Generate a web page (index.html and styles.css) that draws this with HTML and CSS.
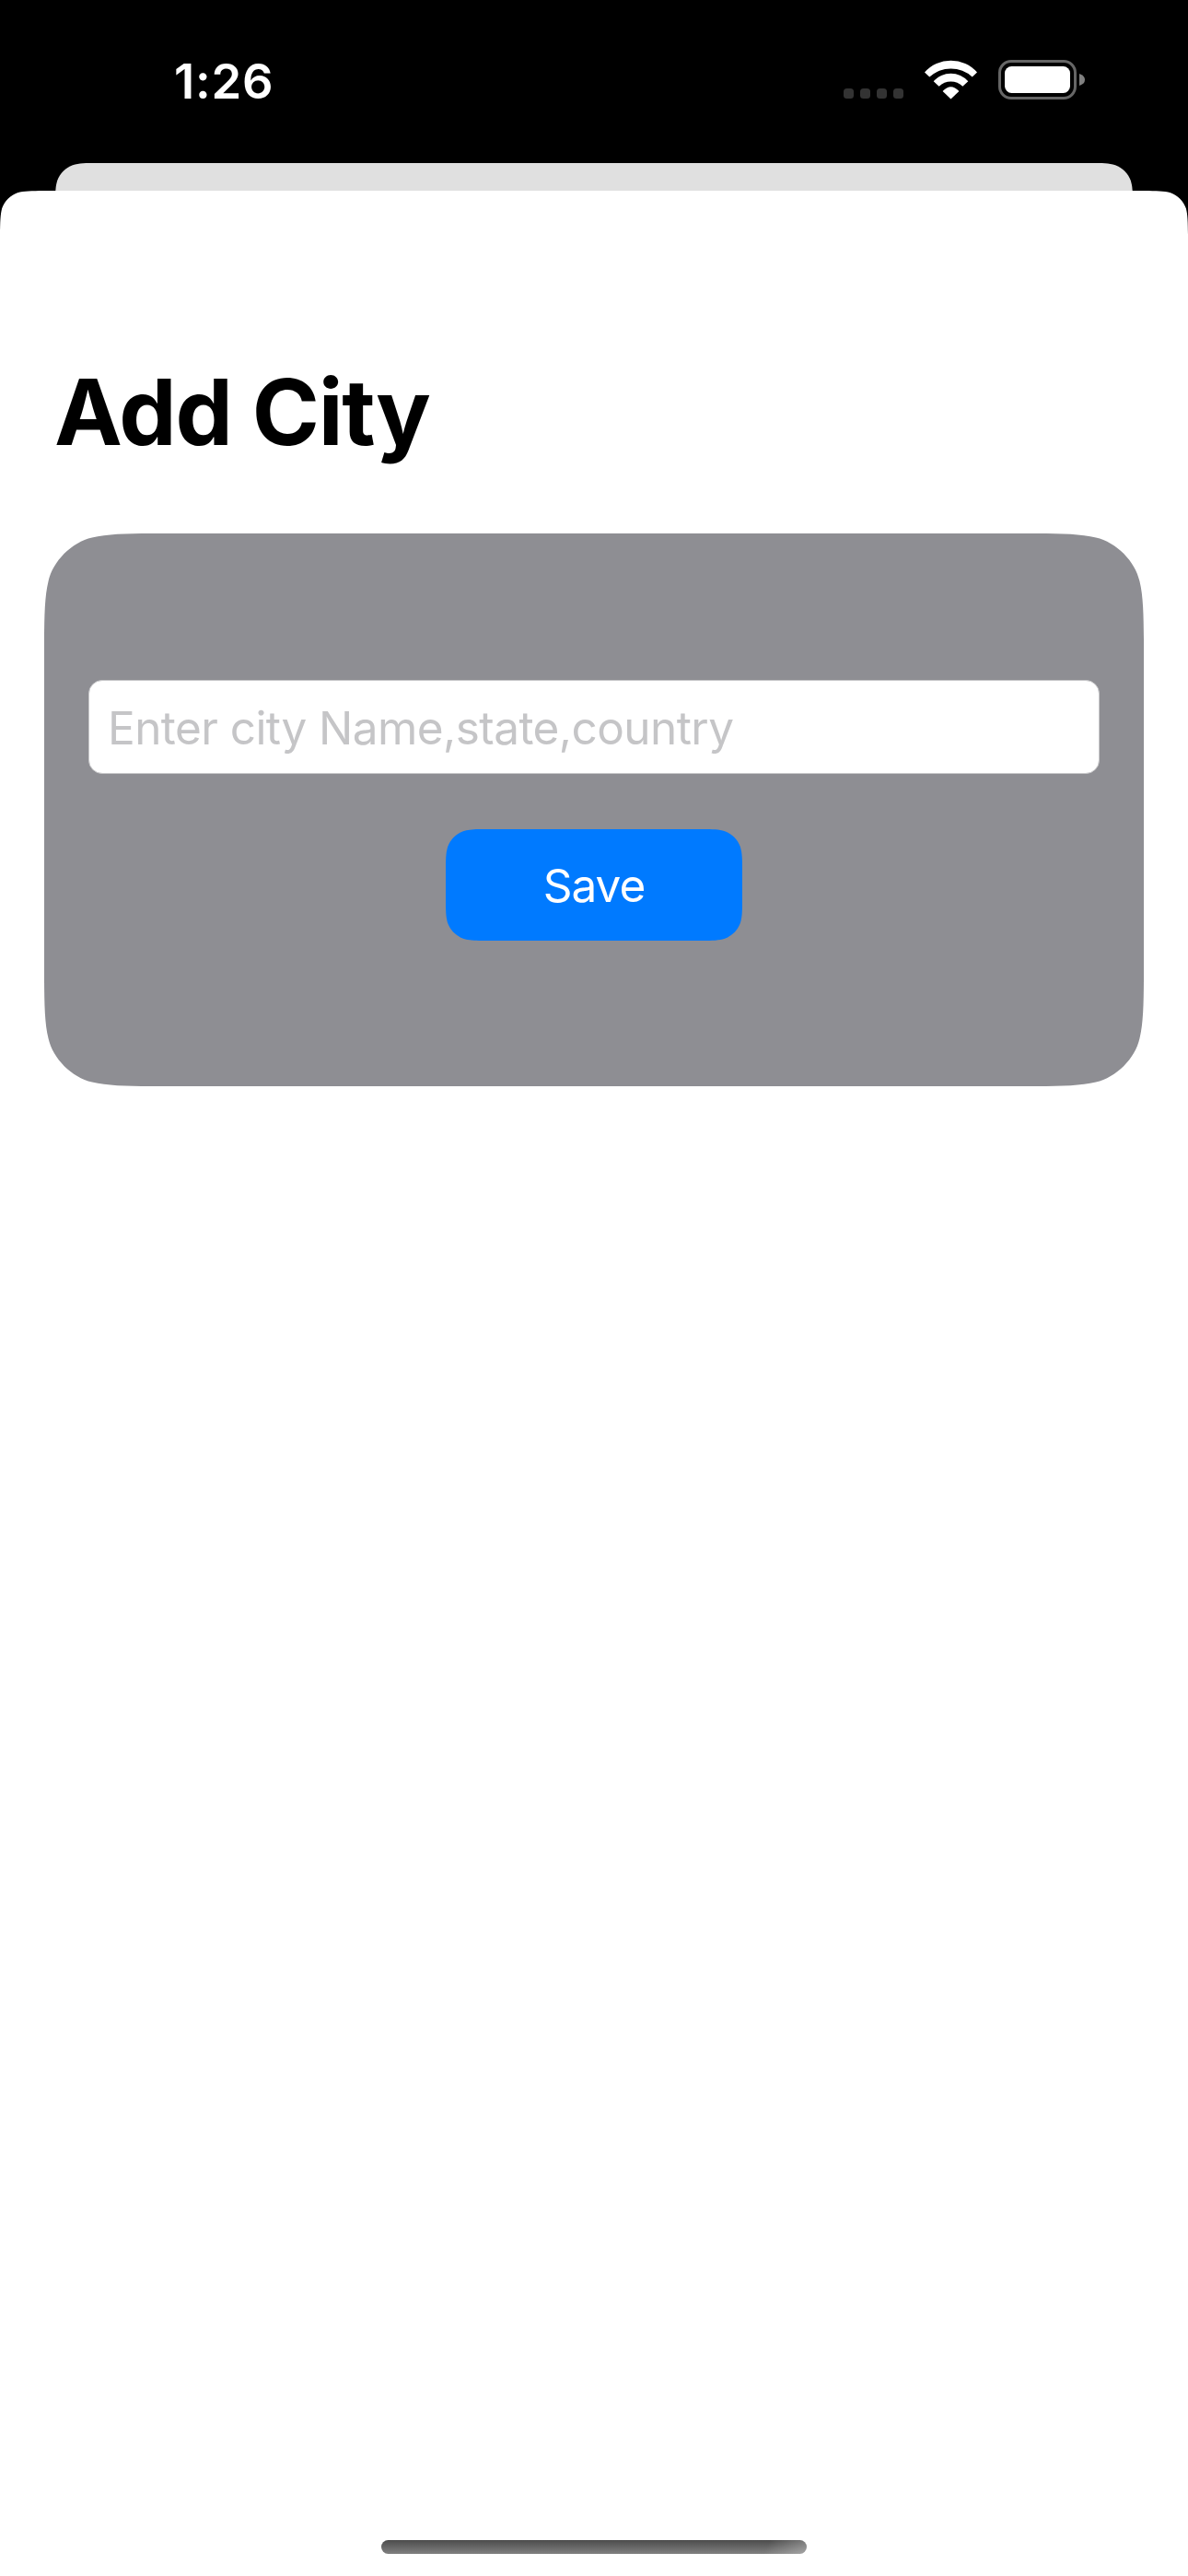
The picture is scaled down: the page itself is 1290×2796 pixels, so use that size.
FILE: index.html
```
<!DOCTYPE html>
<html lang="en">
<head>
<meta charset="utf-8">
<title>Add City</title>
<link rel="stylesheet" href="styles.css">
</head>
<body>
<header class="status-bar">
  <span class="time">1:26</span>
  <svg class="status-icons" width="264" height="44" viewBox="0 0 264 44" aria-hidden="true">
    <g fill="#333">
      <rect x="0" y="31" width="11" height="11" rx="3.5"/>
      <rect x="18" y="31" width="11" height="11" rx="3.5"/>
      <rect x="36" y="31" width="11" height="11" rx="3.5"/>
      <rect x="54" y="31" width="11" height="11" rx="3.5"/>
    </g>
    <g fill="#fff">
      <path d="M88 13.5A38 38 0 0 1 145 13.5L139.700 18.500A34.400 34.400 0 0 0 93.300 18.500Z"/>
      <path d="M97.700 23.300A25 25 0 0 1 135.300 23.300L129.300 28.800A18 18 0 0 0 103.700 28.800Z"/>
      <path d="M107.600 34Q116.500 24.600 125.400 34L116.500 42.500Z"/>
    </g>
    <rect x="169.500" y="1.500" width="82" height="40" rx="12.500" fill="none" stroke="#666" stroke-width="3"/>
    <rect x="175" y="7" width="71" height="29" rx="7.500" fill="#fff"/>
    <path d="M256 15Q262 17 262 21.500Q262 26 256 28Z" fill="#808080"/>
  </svg>
</header>
<div class="back-sheet"></div>
<main class="sheet">
  <h1 class="title">Add City</h1>
  <form class="card">
    <input class="city-field" type="text" placeholder="Enter city Name,state,country" aria-label="City">
    <button class="save" type="button">Save</button>
  </form>
  <div class="home-indicator"></div>
</main>
</body>
</html>
```
FILE: styles.css
```
* {
  box-sizing: border-box;
}

body {
  margin: 0;
  width: 1290px;
  height: 2796px;
  display: flex;
  flex-direction: column;
  overflow: hidden;
  background: #000;
  font-family: Inter, "Liberation Sans", sans-serif;
}

.status-bar {
  display: flex;
  justify-content: space-between;
  height: 177px;
  padding: 65px 110px 0 189px;
}

.time {
  height: 46px;
  color: #fff;
  font-size: 52.5px;
  font-weight: 600;
  line-height: 46px;
  letter-spacing: 0.8px;
}

.back-sheet {
  height: 30px;
  margin: 0 60px;
  background: #e0e0e0;
  /* continuous-curvature corners, radius 30 */
  clip-path: path("M0 46C0 32.600 0 26 2.200 18.900C5 11.200 11.200 5 18.900 2.200C26 0 32.600 0 46 0H1124C1137.400 0 1144 0 1151.100 2.200C1158.800 5 1165 11.200 1167.800 18.900C1170 26 1170 32.600 1170 46Z");
}

.sheet {
  flex: 1;
  display: flex;
  flex-direction: column;
  padding: 180px 48px 24px;
  background: #fff;
  clip-path: path("M0 48C0.200 34 0.300 26 2.200 18.900C5 11.200 11.200 5 18.900 2.200C26 0.300 34 0.200 48 0H1242C1256 0.200 1264 0.300 1271.100 2.200C1278.800 5 1285 11.200 1287.800 18.900C1289.700 26 1289.800 34 1290 48V2589H0Z");
}

.title {
  margin: 0 0 72px;
  padding-left: 11px;
  color: #000;
  font-size: 99px;
  font-weight: 700;
  line-height: 120px;
  letter-spacing: -1.3px;
}

.card {
  display: flex;
  flex-direction: column;
  align-items: center;
  gap: 60px;
  height: 600px;
  padding: 159px 48px 0;
  background: #8e8e93;
  /* continuous-curvature corners, radius 75 */
  clip-path: path("M0 116C0.200 88 0.600 68 4.500 52C9.400 30 30 9.400 52 4.500C68 0.600 88 0.200 116 0H1078C1106 0.200 1126 0.600 1142 4.500C1164 9.400 1184.600 30 1189.500 52C1193.400 68 1193.800 88 1194 116V484C1193.800 512 1193.400 532 1189.500 548C1184.600 570 1164 590.600 1142 595.500C1126 599.400 1106 599.800 1078 600H116C88 599.800 68 599.400 52 595.500C30 590.600 9.400 570 4.500 548C0.600 532 0.200 512 0 484Z");
}

.city-field {
  width: 1098px;
  height: 102px;
  padding: 2px 20px 0;
  border: 1px solid #c8c8ca;
  border-radius: 15px;
  background: #fff;
  color: #000;
  font: 400 49.5px Inter, "Liberation Sans", sans-serif;
  letter-spacing: -0.57px;
}

.city-field::placeholder {
  color: #c5c5c7;
  opacity: 1;
}

.save {
  width: 322px;
  height: 121px;
  padding: 0;
  border: 0;
  background: #007aff;
  color: #fff;
  font: 400 49.5px Inter, "Liberation Sans", sans-serif;
  letter-spacing: -1px;
  clip-path: path("M0 46C0 32.600 0 26 2.200 18.900C5 11.200 11.200 5 18.900 2.200C26 0 32.600 0 46 0H276C289.400 0 296 0 303.100 2.200C310.800 5 317 11.200 319.800 18.900C322 26 322 32.600 322 46V75C322 88.400 322 95 319.800 102.100C317 109.800 310.800 116 303.100 118.800C296 121 289.400 121 276 121H46C32.600 121 26 121 18.900 118.800C11.200 116 5 109.800 2.200 102.100C0 95 0 88.400 0 75Z");
}

.home-indicator {
  align-self: center;
  width: 462px;
  height: 15px;
  margin-top: auto;
  border-radius: 7.5px;
  background:
    linear-gradient(115deg, transparent 90%, rgba(255, 255, 255, 0.3)),
    linear-gradient(#4c4c4c, #808080);
}
```
